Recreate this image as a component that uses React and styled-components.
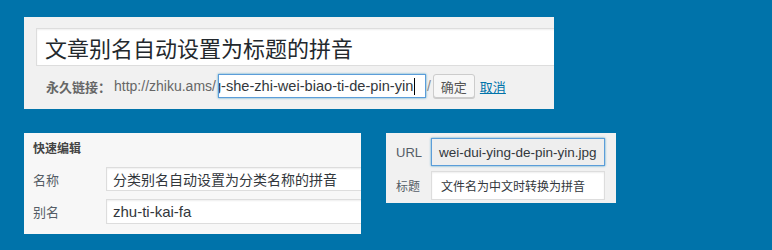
import React from "react";
import styled, { createGlobalStyle } from "styled-components";

const Global = createGlobalStyle`
  html, body { margin: 0; padding: 0; background: #0073aa; }
  body { font-family: "Liberation Sans", "Noto Sans CJK SC", sans-serif; }
  * { box-sizing: border-box; }
`;

const Page = styled.div`
  width: 772px;
  height: 250px;
  padding: 17px 0 0 24px;
  display: flex;
  flex-direction: column;
  gap: 24px;
  overflow: hidden;
`;

const Panel = styled.div`
  background: ${(p) => p.$bg || "#f1f1f1"};
  width: ${(p) => p.$w}px;
  height: ${(p) => p.$h}px;
  overflow: hidden;
`;

const TitlePanel = styled(Panel)`
  padding: 11px 0 0 12px;
`;

const TitleField = styled.div`
  height: 38px;
  margin-right: -4px;
  background: #fff;
  border: 1px solid #ddd;
  box-shadow: inset 0 1px 2px rgba(0, 0, 0, 0.07);
  display: flex;
  align-items: center;
  padding: 0 0 0 8px;
  font-size: 22px;
  color: #23282d;
  white-space: nowrap;
`;

const PermaRow = styled.div`
  margin-top: 8px;
  margin-left: 10px;
  height: 24px;
  display: flex;
  align-items: center;
  white-space: nowrap;
  font-size: 13px;
  color: #666;
`;

const PermaLabel = styled.span`
  font-weight: bold;
  color: #666;
  margin-right: 3px;
`;

const Host = styled.span`
  font-size: 14px;
  color: #666;
  margin-right: 2px;
`;

const SlugField = styled.div`
  width: 208px;
  height: 24px;
  border: 1px solid #5b9dd9;
  box-shadow: 0 0 2px rgba(30, 140, 190, 0.8);
  background: #fff;
  overflow: hidden;
  display: flex;
  align-items: center;
  font-size: 14.6px;
  color: #32373c;
`;

const SlugText = styled.span`
  margin-left: -6px;
  display: flex;
  align-items: center;
`;

const Caret = styled.span`
  display: inline-block;
  width: 1px;
  height: 17px;
  background: #000;
  margin-left: 1px;
`;

const Slash = styled.span`
  font-size: 14px;
  color: #888;
  margin: 0 2px 0 1px;
`;

const Button = styled.button`
  height: 24px;
  padding: 0 7px;
  border: 1px solid #ccc;
  border-radius: 3px;
  background: #f7f7f7;
  box-shadow: 0 1px 0 #ccc;
  font-family: inherit;
  font-size: 13px;
  color: #555;
  margin-right: 5px;
`;

const Link = styled.a`
  font-size: 13px;
  color: #0073aa;
  text-decoration: underline;
`;

const BottomRow = styled.div`
  display: flex;
  gap: 25px;
  align-items: flex-start;
`;

const QuickPanel = styled(Panel)`
  padding: 8px 0 0 9px;
`;

const QuickTitle = styled.div`
  font-size: 12px;
  font-weight: bold;
  color: #444;
  height: 16px;
  line-height: 16px;
  margin-bottom: 10px;
`;

const Form = styled.div`
  display: grid;
  grid-template-columns: ${(p) => p.$label}px 1fr;
  row-gap: ${(p) => p.$gap}px;
  align-items: center;
`;

const Label = styled.span`
  font-size: ${(p) => p.$size || 13}px;
  color: #555d66;
`;

const Field = styled.div`
  height: ${(p) => p.$h}px;
  margin-right: ${(p) => p.$mr || 0}px;
  background: ${(p) => p.$bg || "#fff"};
  border: 1px solid ${(p) => p.$border || "#ddd"};
  box-shadow: ${(p) => p.$shadow || "inset 0 1px 2px rgba(0, 0, 0, 0.07)"};
  display: flex;
  align-items: center;
  padding-left: ${(p) => p.$pl}px;
  font-size: ${(p) => p.$size}px;
  color: #32373c;
  white-space: nowrap;
  overflow: hidden;
`;

const MediaPanel = styled(Panel)`
  padding: 5px 11px 0 10px;
`;

export default function App() {
  return (
    <>
      <Global />
      <Page>
        <TitlePanel $w={530} $h={92}>
          <TitleField>文章别名自动设置为标题的拼音</TitleField>
          <PermaRow>
            <PermaLabel>永久链接：</PermaLabel>
            <Host>http://zhiku.ams/</Host>
            <SlugField>
              <SlugText>
                g-she-zhi-wei-biao-ti-de-pin-yin
                <Caret />
              </SlugText>
            </SlugField>
            <Slash>/</Slash>
            <Button>确定</Button>
            <Link>取消</Link>
          </PermaRow>
        </TitlePanel>
        <BottomRow>
          <QuickPanel $w={337} $h={101} $bg="#f7f7f7">
            <QuickTitle>快速编辑</QuickTitle>
            <Form $label={73} $gap={8}>
              <Label>名称</Label>
              <Field $h={24} $pl={6} $size={14} $mr={-4}>
                分类别名自动设置为分类名称的拼音
              </Field>
              <Label>别名</Label>
              <Field $h={25} $pl={6} $size={15} $mr={-4}>
                zhu-ti-kai-fa
              </Field>
            </Form>
          </QuickPanel>
          <MediaPanel $w={230} $h={70}>
            <Form $label={35} $gap={5}>
              <Label $size={13}>URL</Label>
              <Field
                $h={28}
                $pl={7}
                $size={13.5}
                $bg="#eeeeee"
                $border="#5b9dd9"
                $shadow="0 0 2px rgba(30, 140, 190, 0.8)"
              >
                wei-dui-ying-de-pin-yin.jpg
              </Field>
              <Label $size={12}>标题</Label>
              <Field $h={29} $pl={9} $size={12}>
                文件名为中文时转换为拼音
              </Field>
            </Form>
          </MediaPanel>
        </BottomRow>
      </Page>
    </>
  );
}
